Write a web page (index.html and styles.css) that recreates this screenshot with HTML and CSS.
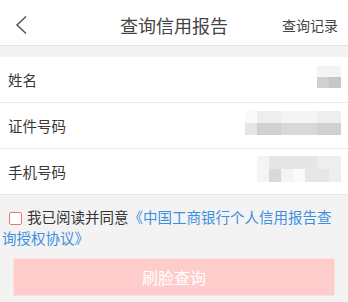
FILE: index.html
```html
<!DOCTYPE html>
<html lang="zh-CN">
<head>
<meta charset="utf-8">
<title>查询信用报告</title>
<link rel="stylesheet" href="styles.css">
</head>
<body>
<header class="topbar">
  <span class="back">
    <svg width="14" height="20" viewBox="0 0 14 20"><path d="M12 1.5 L3 10 L12 18.5" fill="none" stroke="#505860" stroke-width="1.5"/></svg>
  </span>
  <h1 class="title">查询信用报告</h1>
  <span class="record">查询记录</span>
</header>
<div class="gap"></div>
<section class="form">
  <div class="row">
    <span class="label">姓名</span>
    <span class="blur blur-name">
      <i class="s1"></i><i class="s1"></i>
      <i class="s5"></i><i class="s6"></i>
    </span>
  </div>
  <div class="row">
    <span class="label">证件号码</span>
    <span class="blur blur-id">
      <i class="s0"></i><i class="s2"></i><i class="s2"></i><i class="s1"></i><i class="s1"></i><i class="s1"></i><i class="s2"></i><i class="s2"></i>
      <i class="s3"></i><i class="s5"></i><i class="s5"></i><i class="s4"></i><i class="s4"></i><i class="s4"></i><i class="s5"></i><i class="s5"></i>
    </span>
  </div>
  <div class="row">
    <span class="label">手机号码</span>
    <span class="blur blur-phone">
      <i class="s1"></i><i class="s3"></i><i class="s3"></i><i class="s3"></i><i class="s3"></i><i class="s2"></i><i class="s2"></i>
      <i class="s1"></i><i class="s4"></i><i class="s1"></i><i class="s0"></i><i class="s3"></i><i class="s3"></i><i class="s2"></i>
    </span>
  </div>
</section>
<section class="agree">
  <p class="agree-text"><span class="check"></span>我已阅读并同意<a class="link">《中国工商银行个人信用报告查询授权协议》</a></p>
  <button class="submit" type="button">刷脸查询</button>
</section>
</body>
</html>
```
FILE: styles.css
```css
* { box-sizing: border-box; }
html, body {
  margin: 0;
  padding: 0;
  background: #f3f3f3;
  font-family: "Noto Sans CJK SC", "Noto Sans", sans-serif;
  color: #333;
}
.topbar {
  height: 46px;
  background: #fff;
  border-bottom: 1px solid #dfe3e8;
  display: flex;
  align-items: center;
  padding: 5px 10px 0 14px;
  position: relative;
}
.back {
  display: flex;
  width: 14px;
  height: 20px;
}
.title {
  position: absolute;
  left: 0;
  right: 0;
  top: 5px;
  bottom: 0;
  margin: 0;
  display: flex;
  align-items: center;
  justify-content: center;
  font-size: 18px;
  font-weight: normal;
  color: #444;
  pointer-events: none;
}
.record {
  margin-left: auto;
  font-size: 14px;
  color: #444;
}
.gap { height: 11px; }
.form { background: #fff; }
.row {
  height: 46px;
  display: flex;
  align-items: center;
  padding: 0 7px 0 8px;
  border-bottom: 1px solid #ebebeb;
}
.row:last-child { border-bottom: 1px solid #e4e4e4; }
.label {
  font-size: 14.5px;
  color: #383838;
}
.blur {
  margin-left: auto;
  margin-bottom: 6px;
  display: grid;
  grid-auto-rows: 11px;
}
.blur i { display: block; }
.blur-name { grid-template-columns: repeat(2, 12px); }
.blur-id { grid-template-columns: repeat(8, 12px); grid-auto-rows: 12px; }
.blur-phone { grid-template-columns: repeat(7, 12px); grid-auto-rows: 13px; }
.s0 { background: #fafafa; }
.s1 { background: #f4f4f4; }
.s2 { background: #eeeeee; }
.s3 { background: #e6e6e6; }
.s4 { background: #d9d9d9; }
.s5 { background: #d0d0d0; }
.s6 { background: #c6c6c6; }
.agree {
  padding: 11px 0 0;
}
.agree-text {
  margin: 0;
  padding: 0 10px 0 2px;
  font-size: 14.5px;
  line-height: 21px;
  color: #333;
}
.check {
  display: inline-block;
  width: 13px;
  height: 13px;
  margin: 0 5px 0 7px;
  border: 1px solid #e87878;
  border-radius: 2px;
  vertical-align: -2px;
  background: #fff;
}
.link { color: #3d90e0; }
.submit {
  display: block;
  width: calc(100% - 26px);
  height: 38px;
  margin: 10px 13px 0;
  background: #ffcccc;
  border: 1px solid #ffdede;
  border-radius: 0;
  color: #fff;
  font-family: inherit;
  font-size: 16px;
}
```
